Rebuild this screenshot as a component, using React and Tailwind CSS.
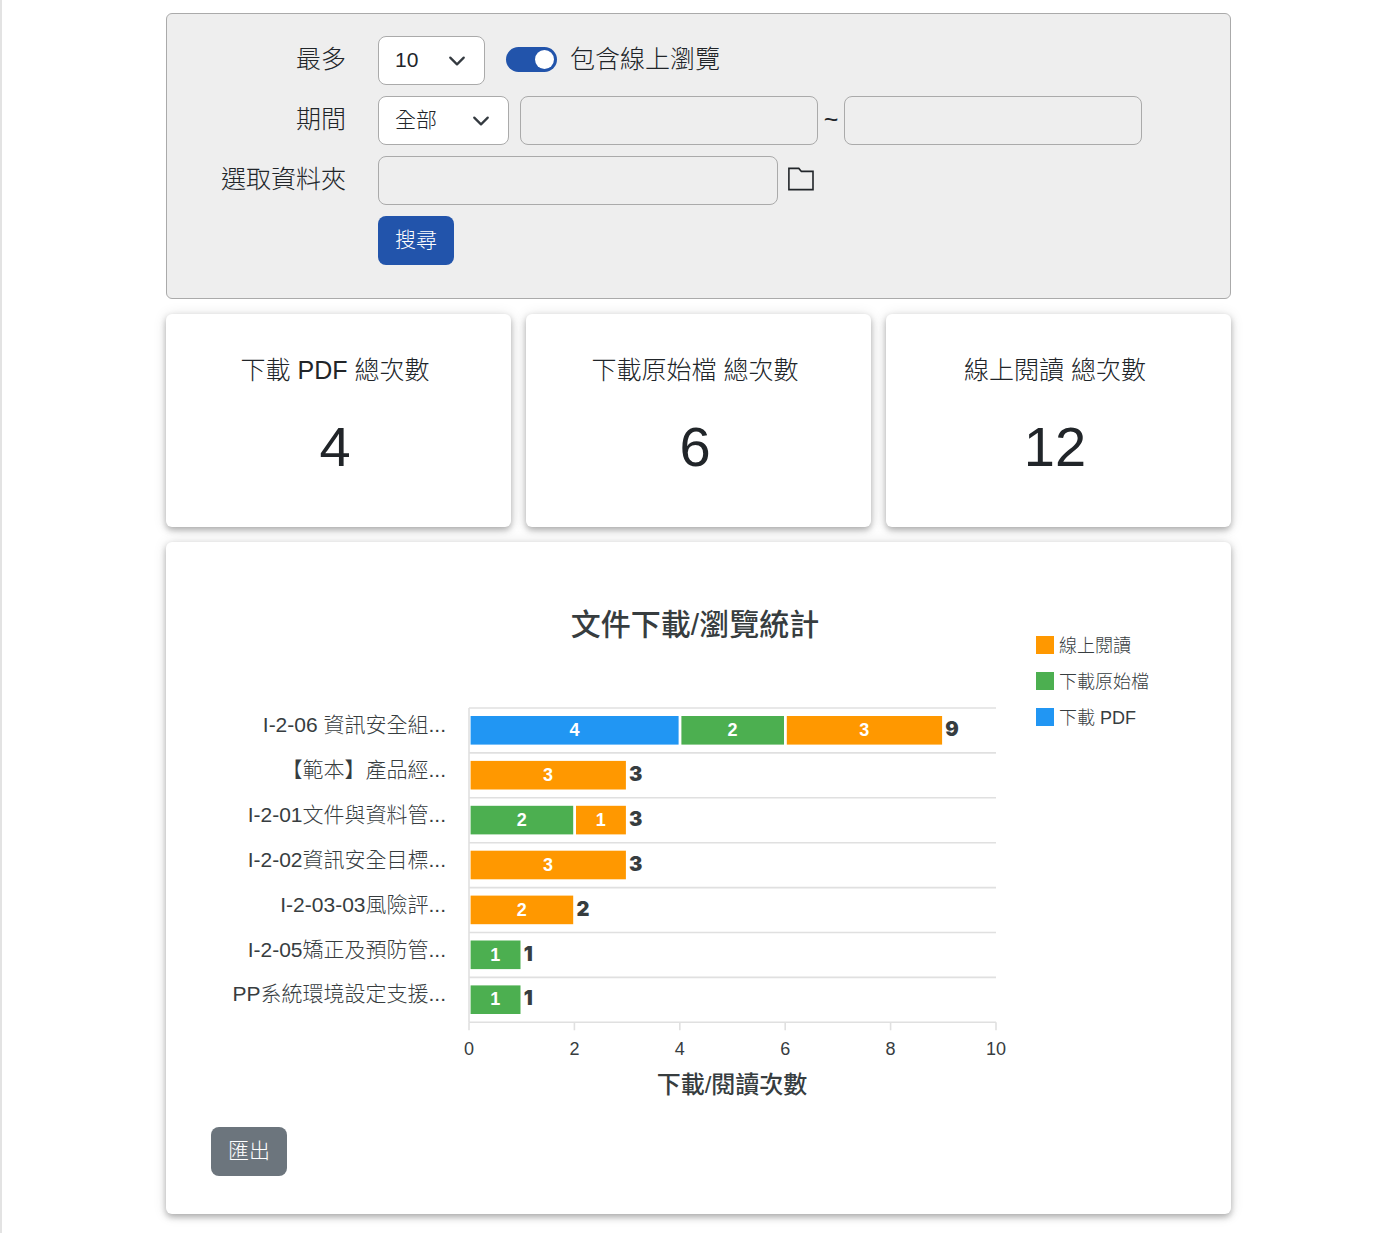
import React, { useState } from 'react';

const SERIES = [
  { key: 'pdf', name: '下載 PDF', color: '#2196f3' },
  { key: 'source', name: '下載原始檔', color: '#4caf50' },
  { key: 'online', name: '線上閱讀', color: '#ff9800' }
];

const ROWS = [
  { label: 'I-2-06 資訊安全組...', pdf: 4, source: 2, online: 3 },
  { label: '【範本】產品經...', online: 3 },
  { label: 'I-2-01文件與資料管...', source: 2, online: 1 },
  { label: 'I-2-02資訊安全目標...', online: 3 },
  { label: 'I-2-03-03風險評...', online: 2 },
  { label: 'I-2-05矯正及預防管...', source: 1 },
  { label: 'PP系統環境設定支援...', source: 1 }
];

const TOTALS = [
  { title: '下載 PDF 總次數', value: 4 },
  { title: '下載原始檔 總次數', value: 6 },
  { title: '線上閱讀 總次數', value: 12 }
];

const TICKS = [0, 2, 4, 6, 8, 10];

// plot area inside the 975 x 540 chart
const LEFT = 258;
const TOP = 121;
const UNIT = 52.7;
const ROW = 44.9;
const RIGHT = LEFT + UNIT * 10;
const BOTTOM = TOP + ROW * ROWS.length;

const cardClass = 'rounded-md bg-white shadow-[0_3px_6px_rgba(0,0,0,0.28),0_1px_14px_rgba(0,0,0,0.12)]';
const fieldClass = 'h-[49px] min-w-0 rounded-lg border border-[#aaaaaa] px-4 text-[21px] outline-none';
const buttonClass = 'h-[49px] rounded-lg px-[17px] pb-0.5 text-[21px] text-white';

function Select({ id, className, value, onChange, options }) {
  return (
    <div className={`relative ${className}`}>
      <select
        id={id}
        value={value}
        onChange={(e) => onChange(e.target.value)}
        className="h-[49px] w-full appearance-none rounded-lg border border-[#aaaaaa] bg-white pr-11 pb-0.5 pl-4 text-[21px] outline-none"
      >
        {options.map((o) => (
          <option key={o}>{o}</option>
        ))}
      </select>
      <svg viewBox="0 0 16 16" className="pointer-events-none absolute top-4 right-[19px] size-[18px]" fill="none">
        <path d="m2 5 6 6 6-6" stroke="#343a40" strokeWidth="2" strokeLinecap="round" strokeLinejoin="round" />
      </svg>
    </div>
  );
}

function Row({ label, htmlFor, children }) {
  return (
    <div className="flex items-center">
      <label htmlFor={htmlFor} className="w-[179px] shrink-0 pb-1 text-right text-[25px] leading-9">
        {label}
      </label>
      <div className="flex min-w-0 flex-1 items-center pl-8">{children}</div>
    </div>
  );
}

function Chart() {
  return (
    <svg viewBox="0 0 975 540" className="block w-full" fill="#373d3f" role="img" aria-label="文件下載/瀏覽統計">
      <text x="484" y="48" textAnchor="middle" className="text-[30px] font-medium">
        文件下載/瀏覽統計
      </text>

      {[...SERIES].reverse().map((s, i) => (
        <g key={s.key}>
          <rect x="825" y={49 + i * 36} width="18" height="18" fill={s.color} />
          <text x="848" y={65 + i * 36} className="text-[18px]">
            {s.name}
          </text>
        </g>
      ))}

      <g stroke="#e0e0e0" strokeWidth="1.6">
        {ROWS.map((row, i) => (
          <path key={row.label} d={`M${LEFT} ${TOP + i * ROW}H${RIGHT}`} />
        ))}
        <path d={`M${LEFT} ${BOTTOM}H${RIGHT}`} />
        <path d={`M${LEFT} ${TOP}V${BOTTOM}`} />
        {TICKS.map((t) => (
          <path key={t} d={`M${LEFT + t * UNIT} ${BOTTOM}v8`} />
        ))}
      </g>

      {ROWS.map((row, i) => {
        const y = TOP + i * ROW;
        let total = 0;
        const bars = SERIES.filter((s) => row[s.key]).map((s) => {
          const start = total;
          total += row[s.key];
          return { ...s, start, count: row[s.key] };
        });
        return (
          <g key={row.label}>
            <text x="235" y={y + 24} textAnchor="end" className="text-[21px]">
              {row.label}
            </text>
            {bars.map((b) => (
              <g key={b.key}>
                <rect
                  x={LEFT + b.start * UNIT + 1.6}
                  y={y + 8}
                  width={b.count * UNIT - 2.8}
                  height="28.6"
                  fill={b.color}
                />
                <text
                  x={LEFT + (b.start + b.count / 2) * UNIT}
                  y={y + 28}
                  textAnchor="middle"
                  fill="#fff"
                  className="text-[18px] font-bold"
                >
                  {b.count}
                </text>
              </g>
            ))}
            <text x={LEFT + total * UNIT + 2} y={y + 28} className="font-['Inter'] text-[20px] font-black">
              {total}
            </text>
          </g>
        );
      })}

      {TICKS.map((t) => (
        <text key={t} x={LEFT + t * UNIT} y="468" textAnchor="middle" className="text-[18px]">
          {t}
        </text>
      ))}
      <text x="521" y="506" textAnchor="middle" className="text-[24px] font-medium">
        下載/閱讀次數
      </text>
    </svg>
  );
}

export default function App() {
  const [limit, setLimit] = useState('10');
  const [period, setPeriod] = useState('全部');
  const [online, setOnline] = useState(true);

  return (
    <div className="min-h-screen border-l-2 border-[#e3e3e3] bg-white pr-[5px] font-['Liberation_Sans','Noto_Sans_CJK_TC',sans-serif] font-light text-[#212529]">
      <main className="mx-auto flex max-w-[1065px] flex-col gap-[15px] pt-[13px] pb-[19px]">
        <form
          onSubmit={(e) => e.preventDefault()}
          className="flex flex-col gap-[11px] rounded-md border border-[#aaaaaa] bg-[#eeeeee] pt-[22px] pr-8 pb-[33px]"
        >
          <Row label="最多" htmlFor="limit">
            <Select id="limit" className="w-[107px]" value={limit} onChange={setLimit} options={['10', '20', '50']} />
            <input
              id="online"
              type="checkbox"
              role="switch"
              checked={online}
              onChange={(e) => setOnline(e.target.checked)}
              className="mb-0.5 ml-[21px] h-[25px] w-[51px] appearance-none rounded-full bg-gray-400 before:mt-[3px] before:ml-[3px] before:block before:size-[19px] before:rounded-full before:bg-white checked:bg-[#2254ab] checked:before:ml-[29px]"
            />
            <label htmlFor="online" className="pb-1 pl-[13px] text-[25px] leading-9">
              包含線上瀏覽
            </label>
          </Row>
          <Row label="期間" htmlFor="period">
            <Select
              id="period"
              className="w-[131px]"
              value={period}
              onChange={setPeriod}
              options={['全部', '本週', '本月']}
            />
            <input type="text" aria-label="開始日期" disabled className={`${fieldClass} ml-[11px] w-[298px]`} />
            <span className="w-[26px] pb-1 text-center text-[25px] leading-9">~</span>
            <input type="text" aria-label="結束日期" disabled className={`${fieldClass} w-[298px]`} />
          </Row>
          <Row label="選取資料夾" htmlFor="folder">
            <input id="folder" type="text" disabled className={`${fieldClass} w-[400px]`} />
            <button type="button" aria-label="選取資料夾" className="mb-1 ml-[10px]">
              <svg viewBox="0 0 26 24" className="h-6 w-[26px]" fill="none" stroke="#212529" strokeWidth="1.6">
                <path d="M.9 1.4H10.8l2.6 3H25V22.6H.9z" />
              </svg>
            </button>
          </Row>
          <Row>
            <button type="submit" className={`${buttonClass} bg-[#2254ab]`}>
              搜尋
            </button>
          </Row>
        </form>

        <section className="grid grid-cols-3 gap-[15px]">
          {TOTALS.map((t) => (
            <div key={t.title} className={`${cardClass} flex flex-col gap-6 pt-[37px] pr-[7px] pb-[46px] text-center`}>
              <h2 className="text-[25px] leading-[38px]">{t.title}</h2>
              <p className="text-[56px] leading-[68px]">{t.value}</p>
            </div>
          ))}
        </section>

        <section className={`${cardClass} px-[45px] pt-[45px] pb-[38px]`}>
          <Chart />
          <button type="button" className={`${buttonClass} bg-[#6c757d]`}>
            匯出
          </button>
        </section>
      </main>
    </div>
  );
}
